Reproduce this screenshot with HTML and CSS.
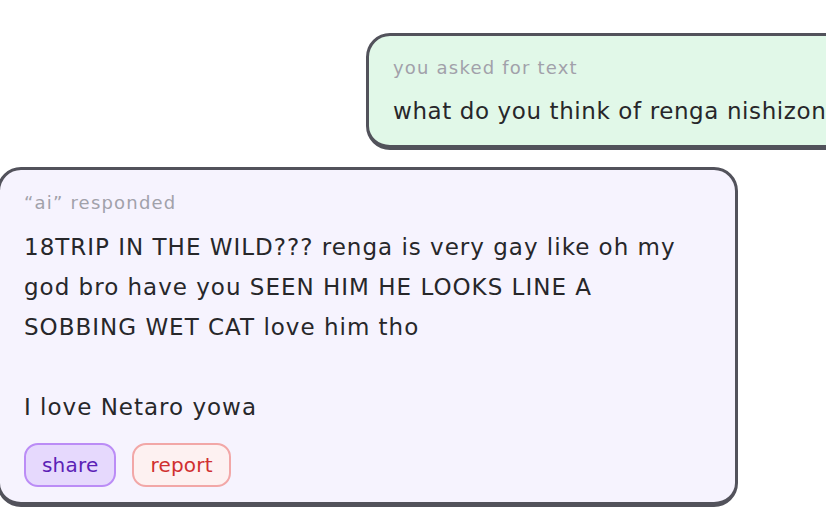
FILE: index.html
```html
<!DOCTYPE html>
<html lang="en">
<head>
<meta charset="utf-8">
<title>chat</title>
<link rel="stylesheet" href="styles.css">
</head>
<body>
<main class="chat">
  <section class="msg msg-user">
    <div class="msg-label">you asked for text</div>
    <div class="msg-text msg-text-single">what do you think of renga nishizono</div>
  </section>
  <section class="msg msg-ai">
    <div class="msg-label">“ai” responded</div>
    <div class="msg-text">18TRIP IN THE WILD??? renga is very gay like oh my god bro have you SEEN HIM HE LOOKS LINE A SOBBING WET CAT love him tho

I love Netaro yowa</div>
    <div class="msg-actions">
      <button class="btn btn-share" type="button">share</button>
      <button class="btn btn-report" type="button">report</button>
    </div>
  </section>
</main>
</body>
</html>
```

FILE: styles.css
```css
html, body {
  margin: 0;
  padding: 0;
  background: #ffffff;
  overflow: hidden;
}

body {
  font-family: "DejaVu Sans", "Noto Sans", sans-serif;
  color: #27272a;
  width: 826px;
  height: 526px;
}

.chat {
  display: flex;
  flex-direction: column;
  align-items: flex-start;
  gap: 17px;
  padding-top: 33px;
}

.msg {
  border: 3px solid #52525b;
  border-bottom-width: 5px;
  border-radius: 24px;
  box-sizing: border-box;
}

.msg-user {
  margin-left: 366px;
  background: #e1f8e8;
  padding: 18px 24px 14px;
  white-space: nowrap;
}

.msg-ai {
  margin-left: -3px;
  width: 741px;
  background: #f6f3fe;
  padding: 19px 24px 15px;
}

.msg-label {
  font-size: 18px;
  letter-spacing: 1.2px;
  line-height: 28px;
  color: #a1a1aa;
}

.msg-text {
  margin-top: 9px;
  font-size: 23px;
  letter-spacing: 1px;
  line-height: 40px;
  white-space: pre-line;
  color: #27272a;
}

.msg-ai .msg-text {
  margin-top: 10px;
}

.msg-text-single {
  white-space: nowrap;
  letter-spacing: 0.6px;
}

.msg-actions {
  display: flex;
  gap: 16px;
  margin-top: 16px;
}

.btn {
  font-family: inherit;
  font-size: 20px;
  letter-spacing: 0.2px;
  height: 44px;
  padding: 0 16px;
  border-radius: 14px;
  border: 2px solid;
  cursor: pointer;
}

.btn-share {
  background: #e6d9fd;
  border-color: #bb8cf6;
  color: #5b21b6;
}

.btn-report {
  background: #fdf1f1;
  border-color: #f2a7a7;
  color: #d02f2f;
}
```
